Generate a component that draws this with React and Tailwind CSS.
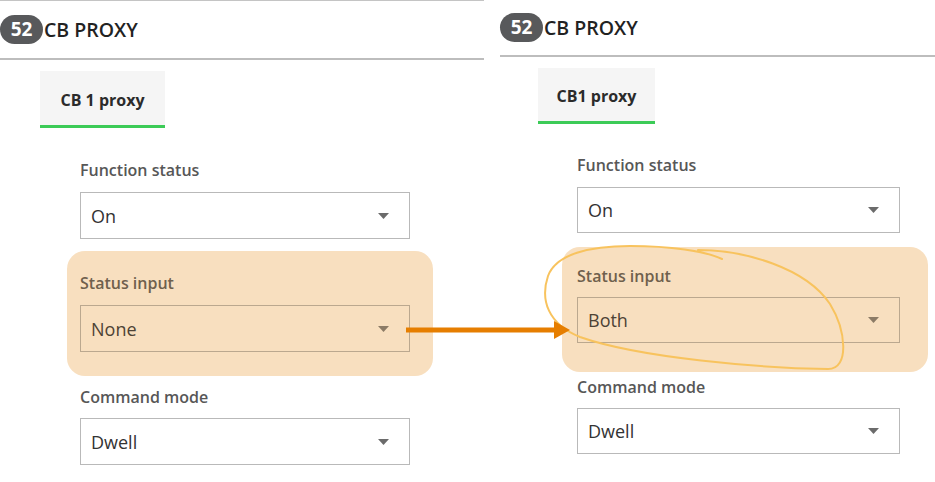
import React from "react";

function Caret({ inHl }) {
  return (
    <svg width="11" height="6" viewBox="0 0 11 6" className="shrink-0">
      <path d="M0 0 L11 0 L5.5 6 Z" fill={inHl ? "#8c7b66" : "#6b6b6b"} />
    </svg>
  );
}

function Select({ value, inHl, w, h }) {
  return (
    <div
      className={`flex items-center justify-between border pl-[10px] pr-[20px] ${w} ${h} ${
        inHl ? "border-[#bba88f] bg-transparent" : "border-[#b9b9b9] bg-white"
      }`}
    >
      <span className={`text-[18px] leading-none ${inHl ? "text-[#4d4235]" : "text-[#333333]"}`}>{value}</span>
      <Caret inHl={inHl} />
    </div>
  );
}

function Label({ children, inHl }) {
  return (
    <div className={`h-[20px] text-[16px] font-semibold leading-[20px] ${inHl ? "text-[#6f604d]" : "text-[#575757]"}`}>
      {children}
    </div>
  );
}

function Header({ top }) {
  return (
    <div className={`flex items-center border-b-2 border-[#bdbdbd] ${top ? "h-[60px] border-t border-t-[#c4c4c4]" : "h-[57px]"}`}>
      <div className="flex h-[29px] w-[43px] items-center justify-center rounded-full bg-[#58595b] text-[19px] font-bold text-white">
        52
      </div>
      <div className="ml-[1px] text-[19.5px] font-semibold text-[#222222]">CB PROXY</div>
    </div>
  );
}

function Tab({ label, cls }) {
  return (
    <div className={`flex items-center justify-center border-b-[3px] border-[#3ccb57] bg-[#f5f5f5] pt-[3px] text-[16px] font-bold text-[#2b2b2b] ${cls}`}>
      {label}
    </div>
  );
}

export default function App() {
  return (
    <div
      className="relative h-[482px] w-[935px] overflow-hidden bg-white"
      style={{ fontFamily: '"Open Sans", "Noto Sans", sans-serif' }}
    >
      <div className="flex">
        {/* Left panel */}
        <div className="w-[484px] shrink-0">
          <Header top />
          <Tab label="CB 1 proxy" cls="ml-[40px] mt-[11px] h-[57px] w-[125px]" />
          <div className="ml-[67px] w-[366px]">
            <div className="mt-[32px] pl-[13px]">
              <Label>Function status</Label>
              <div className="mt-[12px]">
                <Select value="On" w="w-[330px]" h="h-[47px]" />
              </div>
            </div>
            <div className="mt-[12px] rounded-[18px] bg-[#f8dfbf] pb-[24px] pl-[13px] pt-[22px]">
              <Label inHl>Status input</Label>
              <div className="mt-[12px]">
                <Select value="None" inHl w="w-[330px]" h="h-[47px]" />
              </div>
            </div>
            <div className="mt-[11px] pl-[13px]">
              <Label>Command mode</Label>
              <div className="mt-[11px]">
                <Select value="Dwell" w="w-[330px]" h="h-[47px]" />
              </div>
            </div>
          </div>
        </div>

        {/* Right panel */}
        <div className="ml-[16px] flex-1">
          <Header />
          <Tab label="CB1 proxy" cls="ml-[38px] mt-[11px] h-[56px] w-[117px]" />
          <div className="ml-[62px] w-[366px]">
            <div className="mt-[31px] pl-[15px]">
              <Label>Function status</Label>
              <div className="mt-[12px]">
                <Select value="On" w="w-[323px]" h="h-[46px]" />
              </div>
            </div>
            <div className="mt-[14px] rounded-[18px] bg-[#f8dfbf] pb-[29px] pl-[15px] pt-[19px]">
              <Label inHl>Status input</Label>
              <div className="mt-[11px]">
                <Select value="Both" inHl w="w-[323px]" h="h-[46px]" />
              </div>
            </div>
            <div className="mt-[5px] pl-[15px]">
              <Label>Command mode</Label>
              <div className="mt-[11px]">
                <Select value="Dwell" w="w-[323px]" h="h-[46px]" />
              </div>
            </div>
          </div>
        </div>
      </div>

      {/* Annotation overlay */}
      <svg className="pointer-events-none absolute left-0 top-0" width="935" height="482" viewBox="0 0 935 482">
        <path
          d="M722 259 C705 251 670 246 630 246 C590 246 556 254 548 276 C540 300 548 324 580 337 C640 358 760 368 828 369 C850 369 846 330 830 304 C806 268 745 250 698 250"
          fill="none"
          stroke="#f8c35e"
          strokeWidth="2"
          strokeLinecap="round"
        />
        <line x1="406" y1="330" x2="556" y2="330" stroke="#e67e00" strokeWidth="5" />
        <path d="M554 321 L570 330 L554 339 Z" fill="#e67e00" />
      </svg>
    </div>
  );
}
